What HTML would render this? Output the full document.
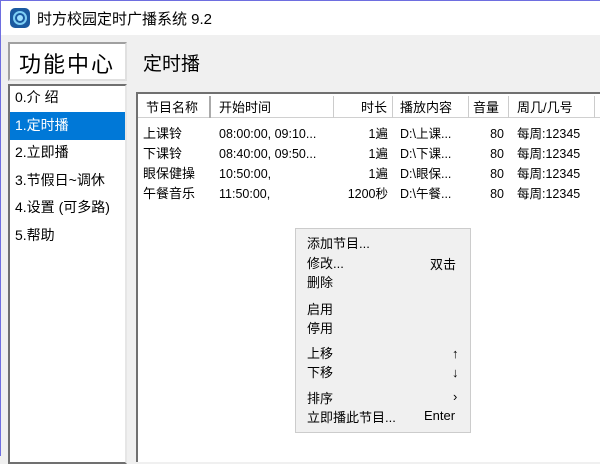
<!DOCTYPE html><html><head><meta charset="utf-8"><style>
*{margin:0;padding:0;box-sizing:border-box}
body{width:600px;height:456px;overflow:hidden;background:#f0f0f0;font-family:"Liberation Sans","Noto Sans CJK SC",sans-serif;font-size:13px;color:#000;position:relative}
.a{position:absolute;white-space:nowrap}
</style></head><body>
<div class="a" style="left:0;top:0;width:600px;height:35px;background:#fff;border-top:1px solid #6e6ee0;border-left:1px solid #6e6ee0"></div>
<div class="a" style="left:0;top:35px;width:1px;height:421px;background:#6e6ee0"></div>
<div class="a" style="left:10px;top:8px;width:20px;height:20px;border-radius:5px;background:#1b5aa0"><div class="a" style="left:3px;top:3px;width:14px;height:14px;border-radius:50%;border:2px solid #7fd0f5"></div><div class="a" style="left:7px;top:7px;width:6px;height:6px;border-radius:50%;background:#9fe0ff"></div></div>
<div class="a" style="left:37px;top:8px;font-size:15px">时方校园定时广播系统 9.2</div>
<div class="a" style="left:8px;top:42px;width:119px;height:39px;background:#fff;border:2px solid #a0a0a0;border-right-color:#e0e0e0;border-bottom-color:#e0e0e0"></div>
<div class="a" style="left:19px;top:47px;font-size:22px;letter-spacing:2px">功能中心</div>
<div class="a" style="left:8px;top:84px;width:119px;height:380px;background:#fff;border:2px solid #707070;border-right-color:#e6e6e6"></div>
<div class="a" style="left:10px;top:112px;width:115px;height:28px;background:#0078d7"></div>
<div class="a" style="left:15px;top:84px;font-size:14px;line-height:27.6px">0.介 绍<br><span style="color:#fff">1.定时播</span><br>2.立即播<br>3.节假日~调休<br>4.设置 (可多路)<br>5.帮助</div>
<div class="a" style="left:143px;top:49px;font-size:19px">定时播</div>
<div class="a" style="left:136px;top:92px;width:470px;height:370px;background:#fff;border:2px solid #707070;border-right:none;border-bottom:none"></div>
<div class="a" style="left:138px;top:94px;width:462px;height:24px;border-bottom:1px solid #d0d0d0"></div>
<div class="a" style="left:209px;top:96px;width:2px;height:22px;background:#aaa"></div>
<div class="a" style="left:333px;top:96px;width:1px;height:22px;background:#ccc"></div>
<div class="a" style="left:392px;top:96px;width:1px;height:22px;background:#ccc"></div>
<div class="a" style="left:468px;top:96px;width:1px;height:22px;background:#ccc"></div>
<div class="a" style="left:508px;top:96px;width:1px;height:22px;background:#ccc"></div>
<div class="a" style="left:594px;top:96px;width:1px;height:22px;background:#ccc"></div>
<div class="a" style="left:146px;top:97px">节目名称</div>
<div class="a" style="left:219px;top:97px">开始时间</div>
<div class="a" style="left:355px;top:97px;width:32px;text-align:right">时长</div>
<div class="a" style="left:400px;top:97px">播放内容</div>
<div class="a" style="left:473px;top:97px">音量</div>
<div class="a" style="left:517px;top:97px">周几/几号</div>
<div class="a" style="left:143px;top:124px;line-height:20px">上课铃<br>下课铃<br>眼保健操<br>午餐音乐</div>
<div class="a" style="left:219px;top:124px;line-height:20px;font-size:12.5px">08:00:00, 09:10...<br>08:40:00, 09:50...<br>10:50:00,<br>11:50:00,</div>
<div class="a" style="left:330px;top:124px;width:58px;text-align:right;line-height:20px;font-size:12.5px">1遍<br>1遍<br>1遍<br>1200秒</div>
<div class="a" style="left:400px;top:124px;line-height:20px;font-size:12.5px">D:\上课...<br>D:\下课...<br>D:\眼保...<br>D:\午餐...</div>
<div class="a" style="left:480px;top:124px;width:24px;text-align:right;line-height:20px;font-size:12.5px">80<br>80<br>80<br>80</div>
<div class="a" style="left:517px;top:124px;line-height:20px;font-size:12.5px">每周:12345<br>每周:12345<br>每周:12345<br>每周:12345</div>
<div class="a" style="left:295px;top:228px;width:176px;height:205px;background:#f0f0f0;border:1px solid #ccc"></div>
<div class="a" style="left:307px;top:234px;line-height:19.5px">添加节目...<br>修改...<br>删除</div>
<div class="a" style="left:307px;top:300px;line-height:19px">启用<br>停用</div>
<div class="a" style="left:307px;top:345px;line-height:18.5px">上移<br>下移</div>
<div class="a" style="left:307px;top:389px;line-height:19px">排序<br>立即播此节目...</div>
<div class="a" style="left:430px;top:254px">双击</div>
<div class="a" style="left:452px;top:345px;line-height:18.5px">↑<br>↓</div>
<div class="a" style="left:453px;top:389px">›</div>
<div class="a" style="left:424px;top:408px">Enter</div>
</body></html>
